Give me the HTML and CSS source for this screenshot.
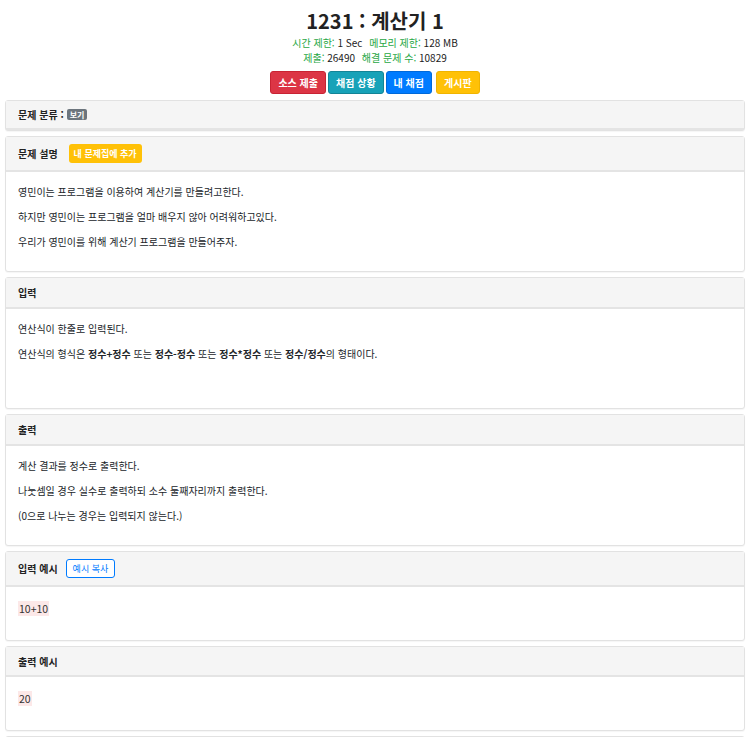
FILE: index.html
```html
<!DOCTYPE html>
<html lang="ko">
<head>
<meta charset="utf-8">
<title>1231 : 계산기 1</title>
<link rel="stylesheet" href="styles.css">
</head>
<body>
<div class="page">
  <header class="top">
    <h1 class="title">1231 : 계산기 1</h1>
    <div class="meta"><span class="lbl">시간 제한:</span> 1 Sec <span class="lbl">메모리 제한:</span> 128 MB</div>
    <div class="meta"><span class="lbl">제출:</span> 26490 <span class="lbl">해결 문제 수:</span> 10829</div>
    <div class="actions">
      <a class="btn btn-red">소스 제출</a>
      <a class="btn btn-teal">채점 상황</a>
      <a class="btn btn-blue">내 채점</a>
      <a class="btn btn-yellow">게시판</a>
    </div>
  </header>

  <section class="card">
    <div class="card-head only">문제 분류 : <span class="badge">보기</span></div>
  </section>

  <section class="card">
    <div class="card-head">문제 설명 <a class="sbtn sbtn-yellow">내 문제집에 추가</a></div>
    <div class="card-body">
      <p>영민이는 프로그램을 이용하여 계산기를 만들려고한다.</p>
      <p>하지만 영민이는 프로그램을 얼마 배우지 않아 어려워하고있다.</p>
      <p>우리가 영민이를 위해 계산기 프로그램을 만들어주자.</p>
    </div>
  </section>

  <section class="card">
    <div class="card-head">입력</div>
    <div class="card-body tall">
      <p>연산식이 한줄로 입력된다.</p>
      <p>연산식의 형식은 <b>정수+정수</b> 또는 <b>정수-정수</b> 또는 <b>정수*정수</b> 또는 <b>정수/정수</b>의 형태이다.</p>
    </div>
  </section>

  <section class="card">
    <div class="card-head">출력</div>
    <div class="card-body">
      <p>계산 결과를 정수로 출력한다.</p>
      <p>나눗셈일 경우 실수로 출력하되 소수 둘째자리까지 출력한다.</p>
      <p>(0으로 나누는 경우는 입력되지 않는다.)</p>
    </div>
  </section>

  <section class="card">
    <div class="card-head with-btn">입력 예시 <a class="sbtn sbtn-outline">예시 복사</a></div>
    <div class="card-body sample"><span class="code">10+10</span></div>
  </section>

  <section class="card">
    <div class="card-head slim">출력 예시</div>
    <div class="card-body sample"><span class="code">20</span></div>
  </section>

  <section class="card">
    <div class="card-head empty"></div>
  </section>
</div>
</body>
</html>
```

FILE: styles.css
```css
html, body {
  margin: 0;
  padding: 0;
  background: #ffffff;
}
body {
  font-family: "Noto Sans CJK KR", "Noto Sans", sans-serif;
  color: #212529;
  font-size: 10px;
}
.page {
  padding: 0 5px;
}
.top {
  text-align: center;
  padding-top: 7px;
  margin-bottom: 6px;
}
.title {
  margin: 0;
  font-size: 20px;
  line-height: 28px;
  font-weight: 700;
  color: #222;
}
.meta {
  font-size: 10px;
  line-height: 15px;
  color: #222;
}
.lbl {
  color: #28a745;
  margin-left: 4px;
}
.meta .lbl:first-child { margin-left: 0; }
.actions {
  display: flex;
  justify-content: center;
  gap: 2px;
  margin-top: 6px;
}
.btn {
  display: inline-block;
  padding: 0 7px;
  height: 23px;
  line-height: 21px;
  border-radius: 3px;
  color: #fff;
  font-weight: 700;
  font-size: 10px;
  box-sizing: border-box;
}
.btn-red { background: #dc3545; border: 1px solid #c82333; }
.btn-teal { background: #17a2b8; border: 1px solid #138496; }
.btn-blue { background: #007bff; border: 1px solid #0069d9; }
.btn-yellow { background: #ffc107; border: 1px solid #f0b400; margin-left: 2px; }

.card {
  border: 1px solid #e2e2e2;
  border-radius: 3px;
  margin-bottom: 5px;
  background: #fff;
  box-shadow: 0 1px 1px rgba(0,0,0,0.04);
}
.card-head {
  background: #f5f5f5;
  border-bottom: 2px solid #e4e4e4;
  padding: 7px 12px 7px;
  line-height: 15px;
  font-weight: 700;
  font-size: 10px;
  color: #222;
  display: flex;
  align-items: center;
}
.card-head.only {
  padding: 6px 12px 6px;
}
.card-head.slim {
  padding: 7px 12px 6px;
}
.card-head.empty {
  height: 15px;
}
.badge {
  display: inline-block;
  background: #6c757d;
  color: #fff;
  font-size: 8px;
  line-height: 11px;
  padding: 0 3px;
  border-radius: 2px;
  margin-left: 3px;
}
.sbtn {
  display: inline-block;
  font-size: 9px;
  line-height: 17px;
  padding: 0 6px;
  border-radius: 3px;
  margin-left: 11px;
}
.sbtn-yellow {
  background: #ffc107;
  color: #fff;
  font-weight: 700;
  line-height: 19px;
  padding: 0 5px;
}
.sbtn-outline {
  border: 1px solid #007bff;
  color: #007bff;
  background: #fff;
  font-weight: 400;
  margin-left: 8px;
}
.card-body {
  padding: 12px 12px 12px;
}
.card-body p {
  margin: 0 0 10px;
  line-height: 15px;
}
.card-body.tall {
  min-height: 75px;
}
.card-body.sample {
  padding: 14px 12px 16px;
  height: 23px;
}
.code {
  background: #fce8e8;
  color: #333;
  font-size: 10.5px;
  line-height: 15px;
  display: inline-block;
  padding: 0 1px;
}
```
